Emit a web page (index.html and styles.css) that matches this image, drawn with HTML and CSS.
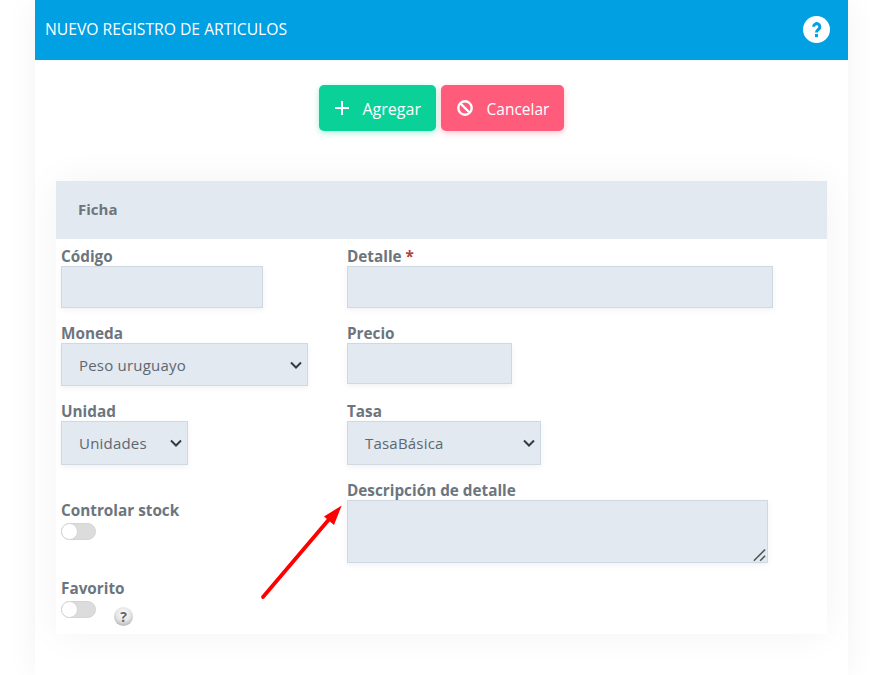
FILE: index.html
```html
<!DOCTYPE html>
<html lang="es">
<head>
<meta charset="utf-8">
<title>Nuevo registro de articulos</title>
<link rel="stylesheet" href="styles.css">
</head>
<body>
<main class="panel">
  <header class="topbar">
    <h1 class="title">NUEVO REGISTRO DE ARTICULOS</h1>
    <svg class="help" viewBox="0 0 27 27" aria-hidden="true">
      <circle cx="13.5" cy="13.5" r="13.5" fill="#fff"/>
      <path d="M10.6 10.800a3.100 3.100 0 1 1 5 2.400c-1.300 1-2.100 1.500-2.100 3.200" stroke="#00a0e3" stroke-width="3" fill="none"/>
      <rect x="12" y="18" width="3" height="3.200" fill="#00a0e3"/>
    </svg>
  </header>
  <div class="actions">
    <button class="btn btn-add" type="button">
      <svg class="btn-icon" viewBox="0 0 16 16" aria-hidden="true"><path d="M8 1v14M1 8h14" stroke="#fff" stroke-width="2" fill="none"/></svg>
      Agregar
    </button>
    <button class="btn btn-cancel" type="button">
      <svg class="btn-icon" viewBox="0 0 16 16" aria-hidden="true"><circle cx="8" cy="8" r="6.700" stroke="#fff" stroke-width="2.400" fill="none"/><path d="M3.500 3.500l9 9" stroke="#fff" stroke-width="2.400"/></svg>
      Cancelar
    </button>
  </div>
  <section class="card">
    <div class="card-head">Ficha</div>
    <div class="form">
      <div class="field r1">
        <label class="label">Código</label>
        <input class="control w-codigo" type="text">
      </div>
      <div class="field r1">
        <label class="label">Detalle <span class="req">*</span></label>
        <input class="control w-detalle" type="text">
      </div>
      <div class="field r2">
        <label class="label">Moneda</label>
        <select class="control select w-moneda"><option>Peso uruguayo</option></select>
      </div>
      <div class="field r2">
        <label class="label">Precio</label>
        <input class="control w-precio" type="text">
      </div>
      <div class="field r3">
        <label class="label">Unidad</label>
        <select class="control select w-unidad"><option>Unidades</option></select>
      </div>
      <div class="field r3">
        <label class="label">Tasa</label>
        <select class="control select w-tasa"><option>TasaBásica</option></select>
      </div>
      <div class="stack">
        <div class="field toggle-field">
          <label class="label">Controlar stock</label>
          <span class="switch"></span>
        </div>
        <div class="field">
          <label class="label">Favorito</label>
          <div class="toggle-row">
            <span class="switch"></span>
            <span class="hint">?</span>
          </div>
        </div>
      </div>
      <div class="field">
        <label class="label">Descripción de detalle</label>
        <textarea class="control area"></textarea>
      </div>
    </div>
  </section>
</main>
<svg class="arrow" width="887" height="675" viewBox="0 0 887 675" aria-hidden="true">
  <path d="M263 597L331 517" stroke="#f00" stroke-width="3.800" stroke-linecap="round" fill="none"/>
  <path d="M341.700 505.500L324 516.500L334 525z" fill="#f00"/>
</svg>
</body>
</html>
```
FILE: styles.css
```css
html, body {
  margin: 0;
  height: 675px;
  overflow: hidden;
  background: #fff;
}
body {
  font-family: "Open Sans", sans-serif;
  position: relative;
}
.panel {
  width: 813px;
  margin-left: 35px;
  height: 675px;
  background: #fff;
  box-shadow: 0 0 30px rgba(0, 0, 0, 0.05);
}
.topbar {
  height: 60px;
  background: #00a0e3;
  display: flex;
  align-items: center;
  justify-content: space-between;
  padding: 0 18px 2px 10px;
  box-sizing: border-box;
}
.title {
  margin: 0;
  font-size: 15.700px;
  line-height: 20px;
  font-weight: 400;
  color: #fff;
}
.help {
  width: 27px;
  height: 27px;
}
.actions {
  display: flex;
  justify-content: center;
  gap: 5px;
  padding-top: 25px;
  padding-right: 1px;
}
.btn {
  height: 46px;
  border: 0;
  border-radius: 5px;
  color: #fff;
  font: 400 15.500px "Open Sans", sans-serif;
  display: flex;
  align-items: center;
  gap: 13px;
  padding: 2px 0 0 15px;
}
.btn-add {
  width: 117px;
  font-size: 16px;
  background: #0ad197;
  box-shadow: 0 2px 6px rgba(10, 209, 151, 0.35);
}
.btn-cancel {
  width: 123px;
  background: #ff5c7c;
  padding-left: 16px;
  gap: 14px;
  box-shadow: 0 2px 6px rgba(255, 92, 124, 0.35);
}
.btn-icon {
  width: 16px;
  height: 16px;
  flex: none;
  margin-top: -2px;
}
.card {
  margin: 50px 21px 0;
  height: 453px;
  background: #fff;
  box-shadow: 0 0 36px rgba(0, 0, 0, 0.05);
}
.card-head {
  height: 58px;
  background: #e2e9f0;
  padding: 0 0 2px 22px;
  box-sizing: border-box;
  display: flex;
  align-items: center;
  font-size: 15px;
  font-weight: 700;
  color: #6c757d;
}
.form {
  display: grid;
  grid-template-columns: 286px 1fr;
  padding: 8px 0 0 5px;
  align-items: start;
}
.field {
  display: flex;
  flex-direction: column;
  align-items: flex-start;
}
.r1 { height: 77px; }
.r2 { height: 78px; }
.r3 { height: 79px; }
.label {
  font-size: 15.300px;
  line-height: 18px;
  font-weight: 700;
  color: #6c757d;
}
.req { color: #a94442; }
.control {
  box-sizing: border-box;
  display: block;
  margin: 0;
  background-color: #e2e9f0;
  border: 1px solid #cfd9e3;
  border-radius: 0;
  box-shadow: 0 2px 6px rgba(0, 0, 0, 0.06);
  font: 400 15px "Open Sans", sans-serif;
  color: #5d6770;
  outline: 0;
}
.w-codigo { width: 202px; height: 42px; margin-top: 1px; }
.w-detalle { width: 426px; height: 42px; margin-top: 1px; }
.w-precio { width: 165px; height: 41px; margin-top: 1px; }
.select {
  height: 43px;
  padding-left: 17px;
  letter-spacing: 0.2px;
  appearance: none;
  background-image: url("data:image/svg+xml,%3Csvg xmlns='http://www.w3.org/2000/svg' viewBox='0 0 12 8'%3E%3Cpath d='M1 1.500l5 5 5-5' fill='none' stroke='%23343a40' stroke-width='2'/%3E%3C/svg%3E");
  background-repeat: no-repeat;
  background-size: 12px 8px;
  background-position: right 5px center;
}
.w-moneda { width: 247px; margin-top: 1px; }
.w-unidad { width: 127px; height: 44px; margin-top: 1px; }
.w-tasa { width: 194px; height: 44px; margin-top: 1px; }
.area {
  width: 421px;
  height: 63px;
  resize: both;
  margin-top: 1px;
}
.area::-webkit-resizer {
  background-image: url("data:image/svg+xml,%3Csvg xmlns='http://www.w3.org/2000/svg' viewBox='0 0 12 12'%3E%3Cpath d='M1.500 11L10.500 2M6.500 11L10.500 7' fill='none' stroke='%23555' stroke-width='1.300'/%3E%3C/svg%3E");
  background-repeat: no-repeat;
  background-position: center;
}
.stack {
  display: flex;
  flex-direction: column;
  padding-top: 20px;
}
.toggle-field { height: 78px; }
.switch {
  display: block;
  width: 35px;
  height: 17px;
  margin-top: 4px;
  box-sizing: border-box;
  border: 1px solid #d4d4d4;
  border-radius: 9px;
  background: #dcdcdc;
  position: relative;
}
.switch::before {
  content: "";
  position: absolute;
  left: -1px;
  top: -1px;
  width: 17px;
  height: 17px;
  border-radius: 50%;
  background: #fff;
  border: 1px solid #d4d4d4;
  box-sizing: border-box;
}
.toggle-row {
  display: flex;
  align-items: flex-start;
  gap: 18px;
}
.hint {
  width: 19px;
  height: 19px;
  margin-top: 10px;
  border-radius: 50%;
  background: radial-gradient(circle at 50% 35%, #fff 0%, #e2e2e2 50%, #999 100%);
  color: #666;
  font: 700 14px/19px "Open Sans", sans-serif;
  text-align: center;
}
.arrow {
  position: absolute;
  left: 0;
  top: 0;
  pointer-events: none;
}
```
